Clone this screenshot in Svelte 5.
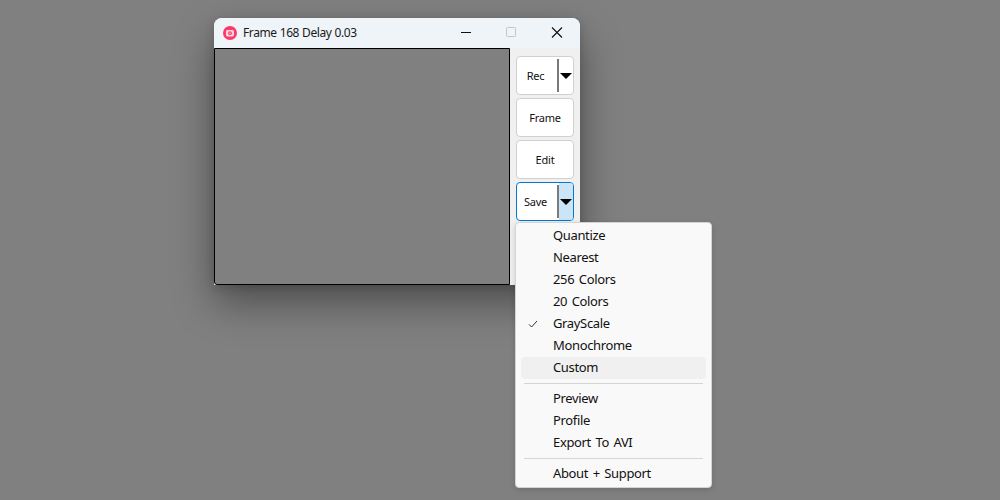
<script>
  const tools = [
    { label: 'Rec', split: true },
    { label: 'Frame' },
    { label: 'Edit' },
    { label: 'Save', split: true, active: true },
  ];

  const menu = [
    [
      { label: 'Quantize' },
      { label: 'Nearest' },
      { label: '256 Colors' },
      { label: '20 Colors' },
      { label: 'GrayScale', checked: true },
      { label: 'Monochrome' },
      { label: 'Custom', hover: true },
    ],
    [{ label: 'Preview' }, { label: 'Profile' }, { label: 'Export To AVI' }],
    [{ label: 'About + Support' }],
  ];
</script>

<div class="desktop">
  <div class="window">
    <header class="titlebar">
      <svg class="app-icon" viewBox="0 0 14 14" width="14" height="14">
        <circle cx="7" cy="7" r="7" fill="#fb3a6b" />
        <rect x="3" y="4" width="8" height="6.4" rx="1.4" fill="#ffd3de" />
        <circle cx="7" cy="7.2" r="1.9" fill="#fb3a6b" />
        <circle cx="7" cy="7.2" r="0.8" fill="#ffd3de" />
      </svg>
      <span class="title">Frame 168 Delay 0.03</span>
      <div class="controls">
        <span class="ctl">
          <svg viewBox="0 0 12 12" width="12" height="12"><line x1="2" y1="5.5" x2="12" y2="5.5" stroke="#111" stroke-width="1" /></svg>
        </span>
        <span class="ctl">
          <svg viewBox="0 0 12 12" width="12" height="12"><rect x="1.5" y="0.5" width="9" height="9" rx="1" fill="none" stroke="#c4c6c8" stroke-width="1" /></svg>
        </span>
        <span class="ctl">
          <svg viewBox="0 0 12 12" width="12" height="12"><path d="M1 0.5L11 10.5M11 0.5L1 10.5" stroke="#111" stroke-width="1.1" fill="none" /></svg>
        </span>
      </div>
    </header>
    <div class="body">
      <div class="canvas"></div>
      <aside class="side">
        {#each tools as t}
          <div class="btn" class:active={t.active}>
            <span class="btn-label" class:split={t.split}>{t.label}</span>
            {#if t.split}
              <span class="bar"></span>
              <span class="drop">
                <span class="arrow"></span>
              </span>
            {/if}
          </div>
        {/each}
      </aside>
    </div>
  </div>

  <div class="menu">
    {#each menu as group, i}
      {#if i > 0}<div class="sep"></div>{/if}
      {#each group as item}
        <div class="item" class:hover={item.hover}>
          {#if item.checked}
            <svg class="check" viewBox="0 0 10 10" width="10" height="10"><path d="M1 5.4L3.6 8L9 2" fill="none" stroke="#333" stroke-width="1" /></svg>
          {/if}
          {item.label}
        </div>
      {/each}
    {/each}
  </div>
</div>

<style>
  :global(body) {
    margin: 0;
    background: #808080;
  }

  .desktop {
    position: relative;
    width: 1000px;
    height: 500px;
    overflow: hidden;
    background: #808080;
    font-family: "Noto Sans", "Open Sans", sans-serif;
    color: #111;
  }

  .window {
    position: absolute;
    left: 214px;
    top: 18px;
    width: 366px;
    height: 267px;
    display: flex;
    flex-direction: column;
    border-radius: 8px 8px 0 0;
    background: #f0f0f0;
    box-shadow: 0 18px 40px rgba(0, 0, 0, 0.4), 0 2px 10px rgba(0, 0, 0, 0.16);
  }

  .titlebar {
    height: 30px;
    flex-shrink: 0;
    display: flex;
    align-items: center;
    padding-left: 9px;
    background: #eff4f9;
    border-radius: 8px 8px 0 0;
  }

  .title {
    margin-left: 6px;
    margin-bottom: 1px;
    font-size: 12px;
    letter-spacing: -0.4px;
    word-spacing: 0.3px;
    color: #1a1a1a;
  }

  .controls {
    margin-left: auto;
    display: flex;
  }

  .ctl {
    width: 46px;
    height: 30px;
    display: flex;
    align-items: center;
    justify-content: center;
  }

  .body {
    flex: 1;
    display: flex;
    min-height: 0;
  }

  .canvas {
    width: 296px;
    box-sizing: border-box;
    border: 1px solid #000;
    border-bottom-left-radius: 3px;
    background: #808080;
  }

  .side {
    flex: 1;
    display: flex;
    flex-direction: column;
    gap: 3px;
    padding: 8px 6px 0;
  }

  .btn {
    height: 39px;
    box-sizing: border-box;
    display: flex;
    align-items: center;
    justify-content: center;
    border: 1px solid #d0d0d0;
    border-radius: 4px;
    background: #fff;
    font-size: 11px;
    letter-spacing: -0.2px;
    color: #111;
    overflow: hidden;
  }

  .btn.active {
    border-color: #0078d4;
  }

  .btn-label {
    flex: 1;
    text-align: center;
  }

  .btn-label.split {
    padding-right: 3px;
  }

  .bar {
    width: 2px;
    align-self: stretch;
    margin: 2px 0;
    background: #7a7a7a;
  }

  .drop {
    width: 14px;
    align-self: stretch;
    display: flex;
    align-items: center;
    justify-content: center;
  }

  .active .drop {
    background: #cce4f7;
  }

  .arrow {
    width: 0;
    height: 0;
    border-left: 6px solid transparent;
    border-right: 6px solid transparent;
    border-top: 6px solid #000;
  }

  .menu {
    position: absolute;
    left: 515px;
    top: 222px;
    width: 197px;
    height: 266px;
    box-sizing: border-box;
    padding: 2px 5px;
    background: #f9f9f9;
    border: 1px solid #d4d4d4;
    border-radius: 4px;
    box-shadow: 0 2px 6px rgba(0, 0, 0, 0.14);
    font-size: 13px;
    letter-spacing: -0.35px;
    word-spacing: 1.5px;
  }

  .item {
    position: relative;
    height: 22px;
    line-height: 21px;
    padding-left: 32px;
    border-radius: 4px;
    color: #111;
    white-space: nowrap;
  }

  .item.hover {
    background: #f0f0f0;
  }

  .check {
    position: absolute;
    left: 7px;
    top: 6px;
  }

  .sep {
    height: 1px;
    margin: 4px 3px 4px;
    background: #d6d6d6;
  }
</style>
